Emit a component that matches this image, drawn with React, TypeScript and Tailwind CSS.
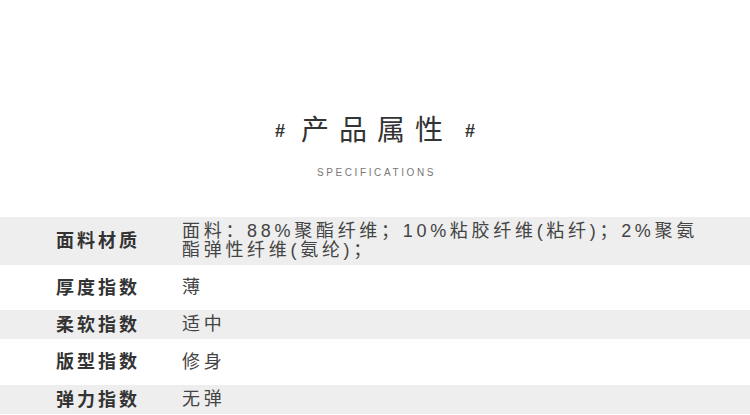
const rows = [
  { label: '面料材质', value: ['面料：88%聚酯纤维；10%粘胶纤维(粘纤)；2%聚氨', '酯弹性纤维(氨纶)；'], h: 'h-[48px]', bg: 'bg-[#eeeeee]' },
  { label: '厚度指数', value: ['薄'], h: 'h-[45px]', bg: 'bg-white' },
  { label: '柔软指数', value: ['适中'], h: 'h-[29px]', bg: 'bg-[#eeeeee]' },
  { label: '版型指数', value: ['修身'], h: 'h-[46px]', bg: 'bg-white' },
  { label: '弹力指数', value: ['无弹'], h: 'h-[29px]', bg: 'bg-[#eeeeee]' },
]

export default function App() {
  return (
    <div className="w-[750px] h-[415px] overflow-hidden bg-white font-['Liberation_Sans','Noto_Sans_CJK_SC',sans-serif]">
      <div className="h-[217px] flex flex-col items-center pt-[114px]">
        <div className="flex items-center text-[#333]">
          <span className="text-[18px] font-bold leading-none">#</span>
          <span className="ml-[16px] mr-[12px] text-[28px] leading-[34px] tracking-[10px]">产品属性</span>
          <span className="text-[18px] font-bold leading-none">#</span>
        </div>
        <div className="mt-[20px] ml-[3px] text-[10px] leading-none tracking-[2.6px] text-[#777]">SPECIFICATIONS</div>
      </div>

      {rows.map((row) => (
        <div key={row.label} className={`flex items-center ${row.h} ${row.bg}`}>
          <div className="w-[182px] shrink-0 pl-[56px] text-[18px] font-bold tracking-[3px] text-[#333] leading-[20px]">
            {row.label}
          </div>
          <div className="text-[18px] tracking-[3.7px] text-[#444] leading-[19px]">
            {row.value.map((line) => (
              <div key={line}>{line}</div>
            ))}
          </div>
        </div>
      ))}
    </div>
  )
}
